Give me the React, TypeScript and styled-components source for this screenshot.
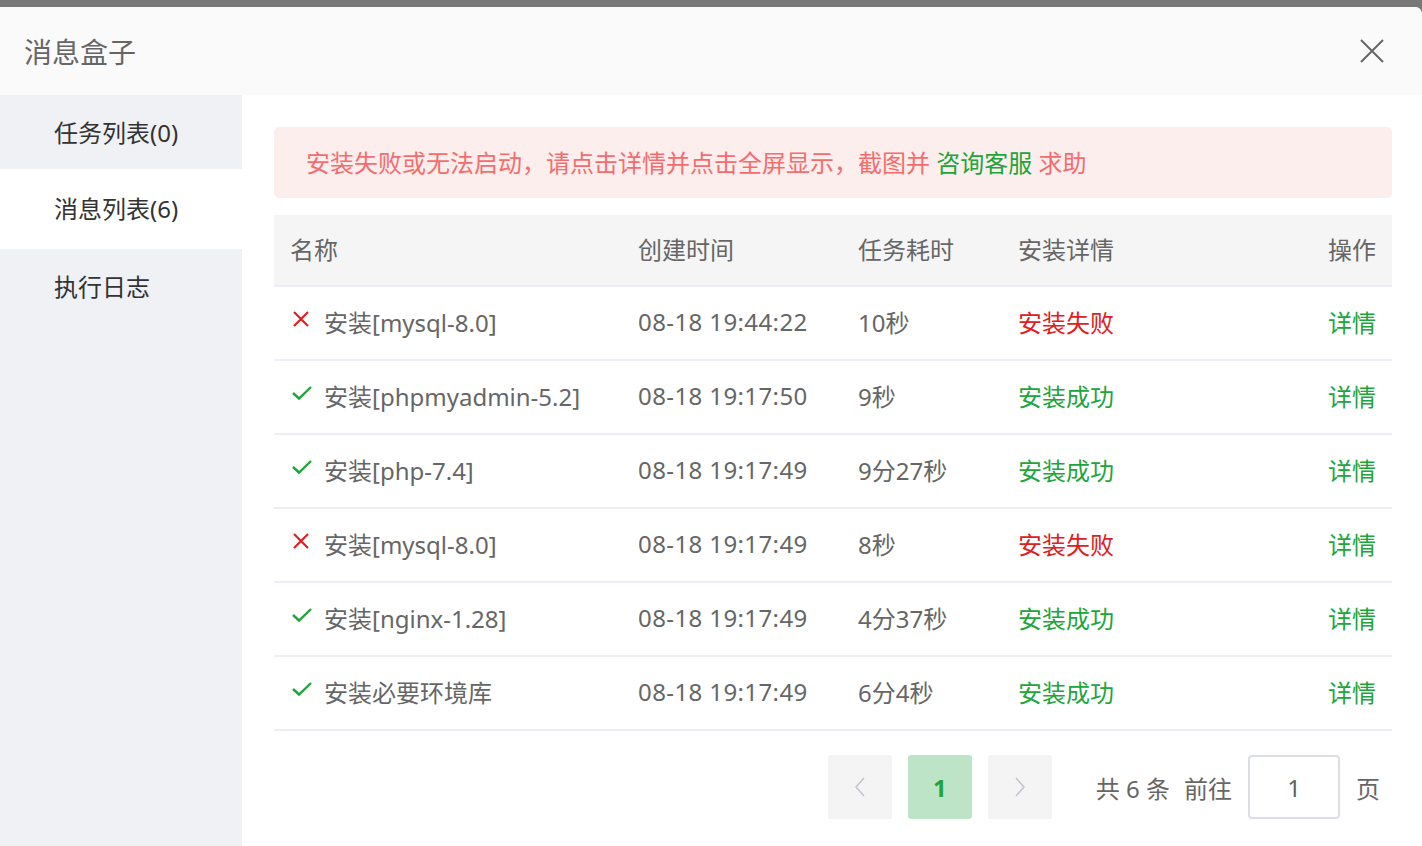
import React from 'react';
import styled, { createGlobalStyle } from 'styled-components';

const GlobalStyle = createGlobalStyle`
  html, body {
    margin: 0;
    padding: 0;
    background: #787878;
    font-family: "Noto Sans", "Noto Sans CJK SC", sans-serif;
  }
  * { box-sizing: border-box; }
`;

const Backdrop = styled.div`
  width: 1422px;
  height: 846px;
  padding-top: 7px;
  background: #787878;
  overflow: hidden;
`;

const Dialog = styled.div`
  height: 839px;
  background: #fff;
  border-top-right-radius: 7px;
  overflow: hidden;
  display: flex;
  flex-direction: column;
`;

const Header = styled.div`
  height: 88px;
  flex-shrink: 0;
  background: #fafafa;
  display: flex;
  align-items: center;
  justify-content: space-between;
  padding: 0 37px 0 24px;
`;

const Title = styled.h2`
  margin: 0;
  font-size: 28px;
  font-weight: 400;
  color: #666;
`;

const CloseButton = styled.button`
  border: 0;
  background: none;
  padding: 0;
  width: 26px;
  height: 26px;
  display: flex;
  align-items: center;
  justify-content: center;
  cursor: pointer;
`;

const Body = styled.div`
  flex: 1;
  display: flex;
`;

const Sidebar = styled.ul`
  width: 242px;
  flex-shrink: 0;
  margin: 0;
  padding: 0;
  list-style: none;
  background: #f0f1f5;
`;

const SideItem = styled.li<{ $active?: boolean }>`
  height: ${(p) => (p.$active ? '80px' : '76px')};
  margin-top: ${(p) => (p.$active ? '-2px' : '0')};
  display: flex;
  align-items: center;
  padding: 0 0 3px 54px;
  font-size: 24px;
  color: #333;
  background: ${(p) => (p.$active ? '#fff' : 'transparent')};
  position: relative;
`;

const Content = styled.div`
  flex: 1;
  padding: 32px 30px 0 32px;
`;

const Alert = styled.div`
  height: 71px;
  border-radius: 5px;
  background: #fdeeee;
  color: #f56c6c;
  font-size: 24px;
  display: flex;
  align-items: center;
  padding: 0 0 2px 32px;
  white-space: pre;
`;

const AlertLink = styled.span`
  color: #20a53a;
`;

const Table = styled.div`
  margin-top: 17px;
`;

const Row = styled.div<{ $head?: boolean }>`
  display: grid;
  grid-template-columns: 348px 220px 160px 1fr 200px;
  height: ${(p) => (p.$head ? '72px' : '74px')};
  padding-bottom: 4px;
  align-items: center;
  background: ${(p) => (p.$head ? '#f5f5f5' : '#fff')};
  border-bottom: 2px solid #ebeef5;
  font-size: 24px;
  color: #666;
`;

const Cell = styled.div<{ $right?: boolean; $color?: string }>`
  padding: 0 16px;
  display: flex;
  align-items: center;
  justify-content: ${(p) => (p.$right ? 'flex-end' : 'flex-start')};
  color: ${(p) => p.$color || 'inherit'};
  white-space: nowrap;
`;

const Mono = styled.span`
  letter-spacing: 0.4px;
`;

const StatusIcon = styled.span`
  width: 22px;
  margin-left: 1px;
  margin-right: 11px;
  display: inline-flex;
  align-items: center;
  position: relative;
  top: -2px;
`;

const Pager = styled.div`
  display: flex;
  align-items: center;
  justify-content: flex-end;
  padding: 24px 12px 0 0;
  font-size: 24px;
  color: #666;
`;

const PageBtn = styled.button<{ $active?: boolean }>`
  width: 64px;
  height: 64px;
  border: 0;
  border-radius: 3px;
  margin-right: 16px;
  background: ${(p) => (p.$active ? '#bde4c6' : '#f4f4f5')};
  color: ${(p) => (p.$active ? '#20a53a' : '#c0c4cc')};
  font-family: inherit;
  font-size: 24px;
  font-weight: ${(p) => (p.$active ? 700 : 400)};
  display: flex;
  align-items: center;
  justify-content: center;
  padding: 0;
`;

const PagerText = styled.span<{ $gap?: number }>`
  margin-left: ${(p) => p.$gap ?? 0}px;
  white-space: pre;
`;

const PageInput = styled.input`
  width: 92px;
  height: 64px;
  margin: 0 16px;
  border: 2px solid #dcdfe6;
  border-radius: 4px;
  text-align: center;
  font-family: inherit;
  font-size: 24px;
  color: #606266;
  outline: none;
`;

const FailIcon = () => (
  <svg width="20" height="20" viewBox="0 0 20 20">
    <path d="M3 3 L17 17 M17 3 L3 17" stroke="#e02020" strokeWidth="2.2" fill="none" />
  </svg>
);

const OkIcon = () => (
  <svg width="22" height="20" viewBox="0 0 22 20">
    <path d="M2 10 L8 15.5 L20 4" stroke="#20a53a" strokeWidth="2.4" fill="none" />
  </svg>
);

type Msg = { name: string; time: string; cost: string; ok: boolean };

const messages: Msg[] = [
  { name: '安装[mysql-8.0]', time: '08-18 19:44:22', cost: '10秒', ok: false },
  { name: '安装[phpmyadmin-5.2]', time: '08-18 19:17:50', cost: '9秒', ok: true },
  { name: '安装[php-7.4]', time: '08-18 19:17:49', cost: '9分27秒', ok: true },
  { name: '安装[mysql-8.0]', time: '08-18 19:17:49', cost: '8秒', ok: false },
  { name: '安装[nginx-1.28]', time: '08-18 19:17:49', cost: '4分37秒', ok: true },
  { name: '安装必要环境库', time: '08-18 19:17:49', cost: '6分4秒', ok: true },
];

export default function App() {
  return (
    <>
      <GlobalStyle />
      <Backdrop>
        <Dialog>
          <Header>
            <Title>消息盒子</Title>
            <CloseButton>
              <svg width="26" height="26" viewBox="0 0 26 26">
                <path d="M2 2 L24 24 M24 2 L2 24" stroke="#666" strokeWidth="2" fill="none" />
              </svg>
            </CloseButton>
          </Header>
          <Body>
            <Sidebar>
              <SideItem>任务列表(0)</SideItem>
              <SideItem $active>消息列表(6)</SideItem>
              <SideItem>执行日志</SideItem>
            </Sidebar>
            <Content>
              <Alert>
                安装失败或无法启动，请点击详情并点击全屏显示，截图并 <AlertLink>咨询客服</AlertLink> 求助
              </Alert>
              <Table>
                <Row $head>
                  <Cell>名称</Cell>
                  <Cell>创建时间</Cell>
                  <Cell>任务耗时</Cell>
                  <Cell>安装详情</Cell>
                  <Cell $right>操作</Cell>
                </Row>
                {messages.map((m, i) => (
                  <Row key={i}>
                    <Cell>
                      <StatusIcon>{m.ok ? <OkIcon /> : <FailIcon />}</StatusIcon>
                      {m.name}
                    </Cell>
                    <Cell>
                      <Mono>{m.time}</Mono>
                    </Cell>
                    <Cell>{m.cost}</Cell>
                    <Cell $color={m.ok ? '#20a53a' : '#e02020'}>{m.ok ? '安装成功' : '安装失败'}</Cell>
                    <Cell $right $color="#20a53a">详情</Cell>
                  </Row>
                ))}
              </Table>
              <Pager>
                <PageBtn>
                  <svg width="14" height="22" viewBox="0 0 14 22">
                    <path d="M11 2 L3 11 L11 20" stroke="#c0c4cc" strokeWidth="1.5" fill="none" />
                  </svg>
                </PageBtn>
                <PageBtn $active>1</PageBtn>
                <PageBtn>
                  <svg width="14" height="22" viewBox="0 0 14 22">
                    <path d="M3 2 L11 11 L3 20" stroke="#c0c4cc" strokeWidth="1.5" fill="none" />
                  </svg>
                </PageBtn>
                <PagerText $gap={28}>共 6 条</PagerText>
                <PagerText $gap={14}>前往</PagerText>
                <PageInput defaultValue="1" />
                <PagerText>页</PagerText>
              </Pager>
            </Content>
          </Body>
        </Dialog>
      </Backdrop>
    </>
  );
}
